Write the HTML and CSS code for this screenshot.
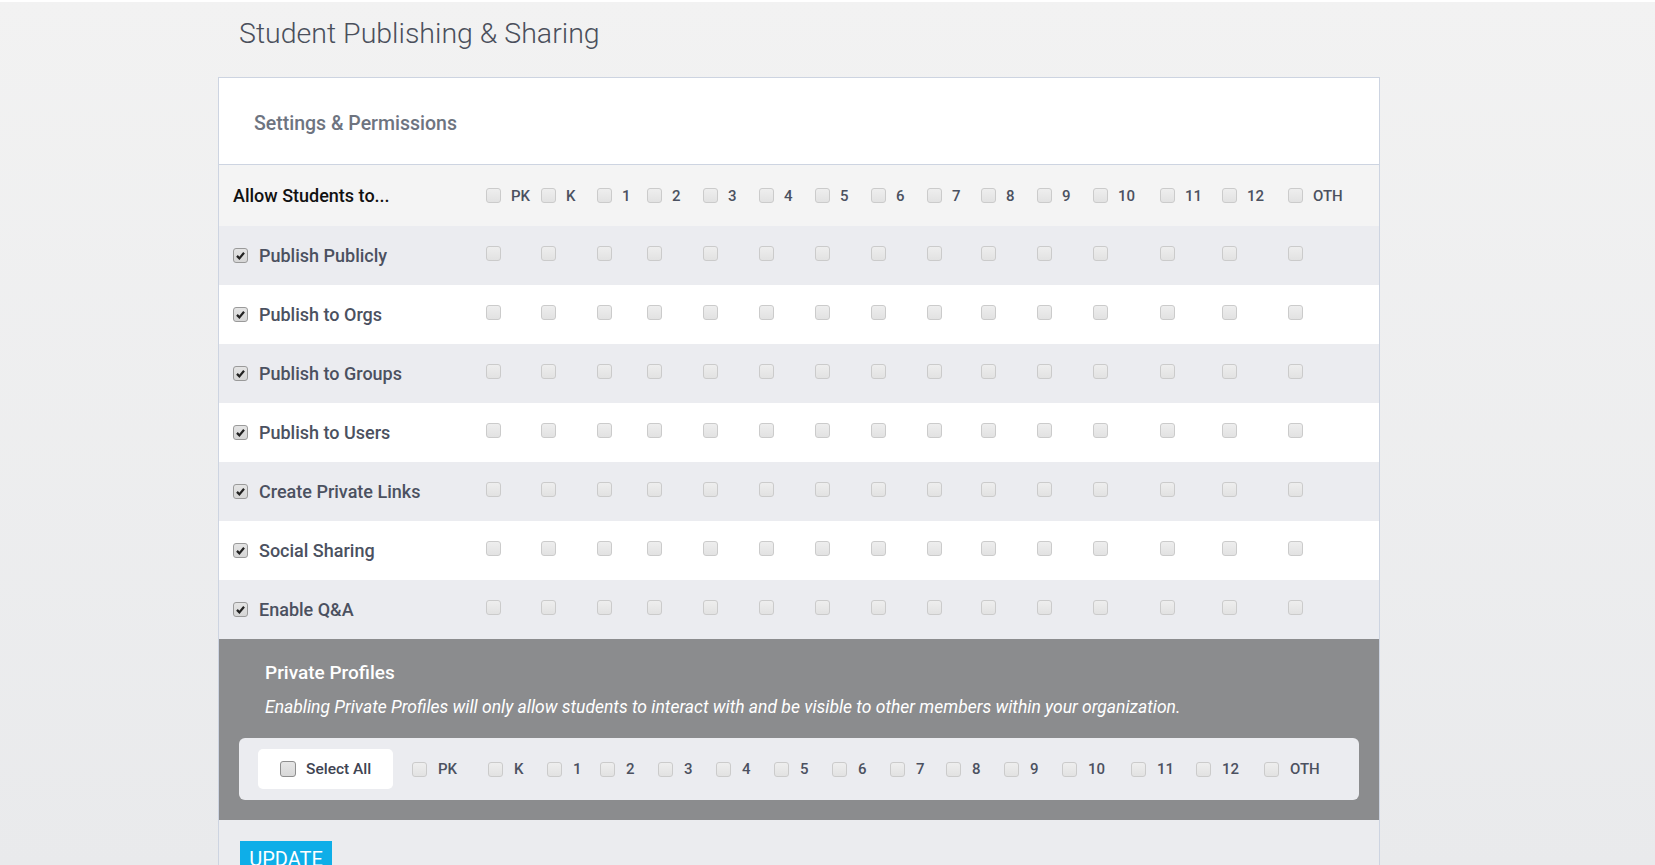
FILE: index.html
```html
<!DOCTYPE html>
<html lang="en">
<head>
    <meta charset="UTF-8">
    <title>Student Publishing &amp; Sharing</title>
    <link rel="stylesheet" href="styles.css">
</head>
<body>
    <div class="page">
        <h1 class="page-title">Student Publishing &amp; Sharing</h1>

        <div class="card">
            <div class="card-header">
                <h2>Settings &amp; Permissions</h2>
            </div>

            <div class="perm-row head-row">
                <div class="perm-label">Allow Students to...</div>
                <div class="grade"><span class="cb"></span><span>PK</span></div>
                <div class="grade"><span class="cb"></span><span>K</span></div>
                <div class="grade"><span class="cb"></span><span>1</span></div>
                <div class="grade"><span class="cb"></span><span>2</span></div>
                <div class="grade"><span class="cb"></span><span>3</span></div>
                <div class="grade"><span class="cb"></span><span>4</span></div>
                <div class="grade"><span class="cb"></span><span>5</span></div>
                <div class="grade"><span class="cb"></span><span>6</span></div>
                <div class="grade"><span class="cb"></span><span>7</span></div>
                <div class="grade"><span class="cb"></span><span>8</span></div>
                <div class="grade"><span class="cb"></span><span>9</span></div>
                <div class="grade"><span class="cb"></span><span>10</span></div>
                <div class="grade"><span class="cb"></span><span>11</span></div>
                <div class="grade"><span class="cb"></span><span>12</span></div>
                <div class="grade"><span class="cb"></span><span>OTH</span></div>
            </div>

            <div class="perm-row shade">
                <div class="perm-label"><span class="cb on"><svg viewBox="0 0 14 14"><path d="M3.2 7.4l2.6 2.7 5-6"/></svg></span>Publish Publicly</div>
                <div class="grade"><span class="cb"></span></div>
                <div class="grade"><span class="cb"></span></div>
                <div class="grade"><span class="cb"></span></div>
                <div class="grade"><span class="cb"></span></div>
                <div class="grade"><span class="cb"></span></div>
                <div class="grade"><span class="cb"></span></div>
                <div class="grade"><span class="cb"></span></div>
                <div class="grade"><span class="cb"></span></div>
                <div class="grade"><span class="cb"></span></div>
                <div class="grade"><span class="cb"></span></div>
                <div class="grade"><span class="cb"></span></div>
                <div class="grade"><span class="cb"></span></div>
                <div class="grade"><span class="cb"></span></div>
                <div class="grade"><span class="cb"></span></div>
                <div class="grade"><span class="cb"></span></div>
            </div>

            <div class="perm-row">
                <div class="perm-label"><span class="cb on"><svg viewBox="0 0 14 14"><path d="M3.2 7.4l2.6 2.7 5-6"/></svg></span>Publish to Orgs</div>
                <div class="grade"><span class="cb"></span></div>
                <div class="grade"><span class="cb"></span></div>
                <div class="grade"><span class="cb"></span></div>
                <div class="grade"><span class="cb"></span></div>
                <div class="grade"><span class="cb"></span></div>
                <div class="grade"><span class="cb"></span></div>
                <div class="grade"><span class="cb"></span></div>
                <div class="grade"><span class="cb"></span></div>
                <div class="grade"><span class="cb"></span></div>
                <div class="grade"><span class="cb"></span></div>
                <div class="grade"><span class="cb"></span></div>
                <div class="grade"><span class="cb"></span></div>
                <div class="grade"><span class="cb"></span></div>
                <div class="grade"><span class="cb"></span></div>
                <div class="grade"><span class="cb"></span></div>
            </div>

            <div class="perm-row shade">
                <div class="perm-label"><span class="cb on"><svg viewBox="0 0 14 14"><path d="M3.2 7.4l2.6 2.7 5-6"/></svg></span>Publish to Groups</div>
                <div class="grade"><span class="cb"></span></div>
                <div class="grade"><span class="cb"></span></div>
                <div class="grade"><span class="cb"></span></div>
                <div class="grade"><span class="cb"></span></div>
                <div class="grade"><span class="cb"></span></div>
                <div class="grade"><span class="cb"></span></div>
                <div class="grade"><span class="cb"></span></div>
                <div class="grade"><span class="cb"></span></div>
                <div class="grade"><span class="cb"></span></div>
                <div class="grade"><span class="cb"></span></div>
                <div class="grade"><span class="cb"></span></div>
                <div class="grade"><span class="cb"></span></div>
                <div class="grade"><span class="cb"></span></div>
                <div class="grade"><span class="cb"></span></div>
                <div class="grade"><span class="cb"></span></div>
            </div>

            <div class="perm-row">
                <div class="perm-label"><span class="cb on"><svg viewBox="0 0 14 14"><path d="M3.2 7.4l2.6 2.7 5-6"/></svg></span>Publish to Users</div>
                <div class="grade"><span class="cb"></span></div>
                <div class="grade"><span class="cb"></span></div>
                <div class="grade"><span class="cb"></span></div>
                <div class="grade"><span class="cb"></span></div>
                <div class="grade"><span class="cb"></span></div>
                <div class="grade"><span class="cb"></span></div>
                <div class="grade"><span class="cb"></span></div>
                <div class="grade"><span class="cb"></span></div>
                <div class="grade"><span class="cb"></span></div>
                <div class="grade"><span class="cb"></span></div>
                <div class="grade"><span class="cb"></span></div>
                <div class="grade"><span class="cb"></span></div>
                <div class="grade"><span class="cb"></span></div>
                <div class="grade"><span class="cb"></span></div>
                <div class="grade"><span class="cb"></span></div>
            </div>

            <div class="perm-row shade">
                <div class="perm-label"><span class="cb on"><svg viewBox="0 0 14 14"><path d="M3.2 7.4l2.6 2.7 5-6"/></svg></span>Create Private Links</div>
                <div class="grade"><span class="cb"></span></div>
                <div class="grade"><span class="cb"></span></div>
                <div class="grade"><span class="cb"></span></div>
                <div class="grade"><span class="cb"></span></div>
                <div class="grade"><span class="cb"></span></div>
                <div class="grade"><span class="cb"></span></div>
                <div class="grade"><span class="cb"></span></div>
                <div class="grade"><span class="cb"></span></div>
                <div class="grade"><span class="cb"></span></div>
                <div class="grade"><span class="cb"></span></div>
                <div class="grade"><span class="cb"></span></div>
                <div class="grade"><span class="cb"></span></div>
                <div class="grade"><span class="cb"></span></div>
                <div class="grade"><span class="cb"></span></div>
                <div class="grade"><span class="cb"></span></div>
            </div>

            <div class="perm-row">
                <div class="perm-label"><span class="cb on"><svg viewBox="0 0 14 14"><path d="M3.2 7.4l2.6 2.7 5-6"/></svg></span>Social Sharing</div>
                <div class="grade"><span class="cb"></span></div>
                <div class="grade"><span class="cb"></span></div>
                <div class="grade"><span class="cb"></span></div>
                <div class="grade"><span class="cb"></span></div>
                <div class="grade"><span class="cb"></span></div>
                <div class="grade"><span class="cb"></span></div>
                <div class="grade"><span class="cb"></span></div>
                <div class="grade"><span class="cb"></span></div>
                <div class="grade"><span class="cb"></span></div>
                <div class="grade"><span class="cb"></span></div>
                <div class="grade"><span class="cb"></span></div>
                <div class="grade"><span class="cb"></span></div>
                <div class="grade"><span class="cb"></span></div>
                <div class="grade"><span class="cb"></span></div>
                <div class="grade"><span class="cb"></span></div>
            </div>

            <div class="perm-row shade">
                <div class="perm-label"><span class="cb on"><svg viewBox="0 0 14 14"><path d="M3.2 7.4l2.6 2.7 5-6"/></svg></span>Enable Q&amp;A</div>
                <div class="grade"><span class="cb"></span></div>
                <div class="grade"><span class="cb"></span></div>
                <div class="grade"><span class="cb"></span></div>
                <div class="grade"><span class="cb"></span></div>
                <div class="grade"><span class="cb"></span></div>
                <div class="grade"><span class="cb"></span></div>
                <div class="grade"><span class="cb"></span></div>
                <div class="grade"><span class="cb"></span></div>
                <div class="grade"><span class="cb"></span></div>
                <div class="grade"><span class="cb"></span></div>
                <div class="grade"><span class="cb"></span></div>
                <div class="grade"><span class="cb"></span></div>
                <div class="grade"><span class="cb"></span></div>
                <div class="grade"><span class="cb"></span></div>
                <div class="grade"><span class="cb"></span></div>
            </div>

            <div class="private-panel">
                <h3>Private Profiles</h3>
                <p>Enabling Private Profiles will only allow students to interact with and be visible to other members within your organization.</p>
                <div class="private-grades">
                    <div class="select-all"><span class="cb big"></span>Select All</div>
                    <div class="grade"><span class="cb"></span><span>PK</span></div>
                    <div class="grade"><span class="cb"></span><span>K</span></div>
                    <div class="grade"><span class="cb"></span><span>1</span></div>
                    <div class="grade"><span class="cb"></span><span>2</span></div>
                    <div class="grade"><span class="cb"></span><span>3</span></div>
                    <div class="grade"><span class="cb"></span><span>4</span></div>
                    <div class="grade"><span class="cb"></span><span>5</span></div>
                    <div class="grade"><span class="cb"></span><span>6</span></div>
                    <div class="grade"><span class="cb"></span><span>7</span></div>
                    <div class="grade"><span class="cb"></span><span>8</span></div>
                    <div class="grade"><span class="cb"></span><span>9</span></div>
                    <div class="grade"><span class="cb"></span><span>10</span></div>
                    <div class="grade"><span class="cb"></span><span>11</span></div>
                    <div class="grade"><span class="cb"></span><span>12</span></div>
                    <div class="grade"><span class="cb"></span><span>OTH</span></div>
                </div>
            </div>

            <div class="card-footer">
                <button class="btn-update">UPDATE</button>
            </div>
        </div>
    </div>
</body>
</html>
```

FILE: styles.css
```css
html, body {
    height: 100%;
}

body {
    margin: 0;
    border-top: 2px solid #fff;
    font-family: Roboto, "Liberation Sans", sans-serif;
    color: #4b5160;
    background: linear-gradient(#f2f2f2, #e9eaec);
    overflow: hidden;
}

.page {
    width: 1162px;
    margin-left: 218px;
}

.page-title {
    margin: 0;
    padding: 15px 0 0 21px;
    height: 75px;
    box-sizing: border-box;
    font-size: 28.5px;
    font-weight: 300;
    line-height: 34px;
    color: #4a4f5b;
}

.card {
    border: 1px solid #cdd4e1;
    border-bottom: none;
    background-color: #ebecef;
    height: 800px;
}

.card-header {
    height: 86px;
    background-color: #fff;
    border-bottom: 1px solid #cdd4e1;
    display: flex;
    align-items: center;
    padding-left: 35px;
}

.card-header h2 {
    margin: 4px 0 0;
    font-size: 19.5px;
    font-weight: 500;
    color: #6e7480;
}

.perm-row {
    display: grid;
    grid-template-columns: 267px 55px 56px 50px 56px 56px 56px 56px 56px 54px 56px 56px 67px 62px 66px 1fr;
    align-items: center;
    height: 59px;
    background-color: #fff;
}

.perm-row.shade {
    background-color: #ebecf0;
}

.perm-row.head-row {
    height: 61px;
    background-color: #f4f4f4;
}

.perm-label {
    display: flex;
    align-items: center;
    padding-left: 14px;
    font-size: 18px;
    font-weight: 500;
    color: #4b5160;
}

.head-row .perm-label {
    color: #111;
}

.perm-label .cb {
    margin-right: 11px;
}

.perm-row .grade .cb {
    margin-top: -4px;
}

.head-row .grade .cb {
    margin-top: 0;
}

.grade {
    display: flex;
    align-items: center;
    font-size: 15px;
    font-weight: 500;
    color: #4b5160;
}

.grade .cb {
    margin-right: 10px;
}

/* custom checkbox boxes */
.cb {
    display: inline-block;
    flex: none;
    width: 15px;
    height: 15px;
    box-sizing: border-box;
    border: 1px solid #cbcbcb;
    border-radius: 3px;
    background: linear-gradient(#eeeeee, #e2e2e2);
}

.cb.on {
    border-color: #9a9a9a;
    background: linear-gradient(#e4e4e4, #d6d6d6);
}

.cb svg {
    display: block;
    width: 13px;
    height: 13px;
    fill: none;
    stroke: #222;
    stroke-width: 2.4;
}

.cb.big {
    width: 16px;
    height: 16px;
    border-color: #8e8e8e;
    background: linear-gradient(#e6e6e6, #d8d8d8);
}

.private-panel {
    background-color: #8b8c8e;
    padding: 22px 20px 20px;
    color: #fff;
}

.private-panel h3 {
    margin: 0 0 0 26px;
    font-size: 19px;
    font-weight: 500;
    line-height: 24px;
}

.private-panel p {
    margin: 11px 0 0 26px;
    font-size: 17.5px;
    font-style: italic;
    font-weight: 400;
    line-height: 22px;
}

.private-grades {
    display: grid;
    grid-template-columns: 154px 76px 59px 53px 58px 58px 58px 58px 58px 56px 58px 58px 69px 65px 68px 1fr;
    align-items: center;
    margin-top: 20px;
    padding: 11px 19px;
    border-radius: 6px;
    background-color: #ebecf0;
}

.select-all {
    display: flex;
    align-items: center;
    width: 135px;
    height: 40px;
    box-sizing: border-box;
    padding-left: 22px;
    border-radius: 5px;
    background-color: #fff;
    font-size: 15.5px;
    font-weight: 500;
    color: #3f4452;
}

.select-all .cb {
    margin-right: 10px;
}

.private-grades .grade .cb {
    margin-right: 11px;
}

.card-footer {
    padding: 21px 21px;
}

.btn-update {
    border: none;
    border-radius: 0;
    background-color: #0eaee8;
    color: #fff;
    font-family: Roboto, "Liberation Sans", sans-serif;
    font-size: 20px;
    width: 92px;
    height: 32px;
    padding: 3px 0 0;
    cursor: pointer;
}
```
